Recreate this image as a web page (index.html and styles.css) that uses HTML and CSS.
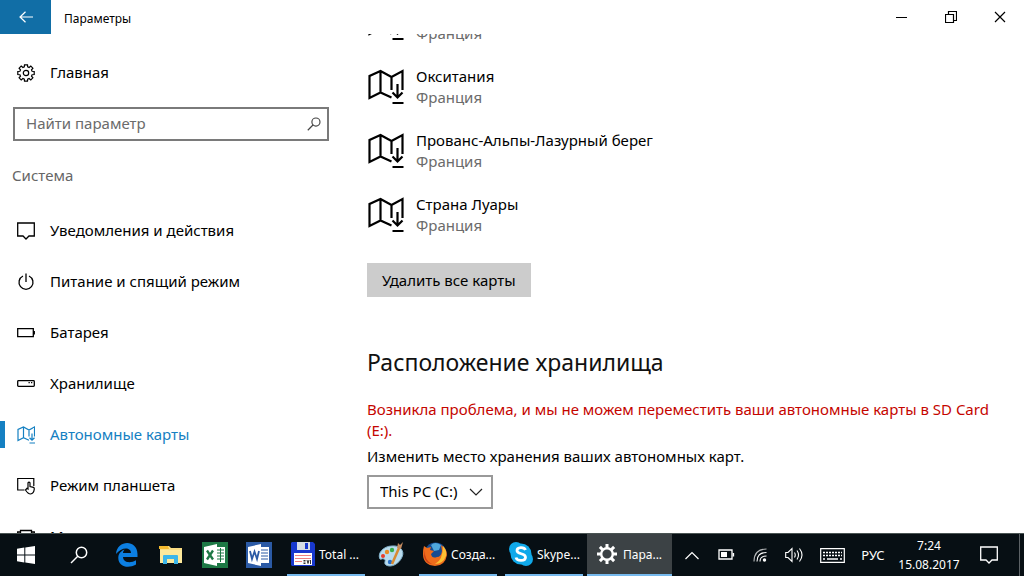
FILE: index.html
```html
<!DOCTYPE html>
<html lang="ru">
<head>
<meta charset="utf-8">
<title>Параметры</title>
<link rel="stylesheet" href="styles.css">
</head>
<body>
<svg class="defs" aria-hidden="true">
  <symbol id="map" viewBox="0 0 36 36">
    <path d="M24 28.500 13 23.500 2 29V7L13 2 24 8 35 2V21M13 2V23.500M24 8V21M30 15V28M25 23.500 30 28.500 35 23.500M25 34H36" fill="none" stroke="currentColor"/>
  </symbol>
  <symbol id="bubble" viewBox="0 0 18 18">
    <path d="M.7 1H17.300V14H12L9 17 6 14H.7Z" fill="none" stroke="currentColor" stroke-width="1.300"/>
  </symbol>
  <symbol id="lens" viewBox="0 0 18 18">
    <path d="M1 17 8 10" fill="none" stroke="currentColor"/><circle cx="11.500" cy="6.500" r="5.200" fill="none" stroke="currentColor"/>
  </symbol>
</svg>
<div class="screen">
  <header class="titlebar">
    <button class="back" aria-label="Назад"><svg width="14" height="12" viewBox="0 0 14 12"><path d="M14 6H1M6.500 .7 1 6 6.500 11.300" fill="none" stroke="#fff" stroke-width="1.200"/></svg></button>
    <h1 class="title">Параметры</h1>
    <div class="window-buttons">
      <button class="window-button" aria-label="Свернуть"><svg width="12" height="12"><path d="M0 6.500H11" stroke="#000"/></svg></button>
      <button class="window-button" aria-label="Восстановить"><svg width="12" height="12"><path d="M.5 3.500H8.500V11.500H.5ZM3.500 3V.5H11.500V9.500H9" fill="none" stroke="#000" stroke-width="1.200"/></svg></button>
      <button class="window-button" aria-label="Закрыть"><svg width="12" height="12"><path d="M1 1 11 11M11 1 1 11" stroke="#000" stroke-width="1.200"/></svg></button>
    </div>
  </header>

  <div class="body">
    <aside class="sidebar">
      <a class="nav-item home" href="#home">
        <svg class="nav-icon" viewBox="0 0 18 18"><path d="M7.300 2.900 7.500 .8H10.500L10.700 2.900 12.100 3.500 13.800 2.100 15.900 4.200 14.500 5.900 15.100 7.300 17.200 7.500V10.500L15.100 10.700 14.500 12.100 15.900 13.800 13.800 15.900 12.100 14.500 10.700 15.100 10.500 17.200H7.500L7.300 15.100 5.900 14.500 4.200 15.900 2.100 13.800 3.500 12.100 2.900 10.700 .8 10.500V7.500L2.900 7.300 3.500 5.900 2.100 4.200 4.200 2.100 5.900 3.500Z" fill="none" stroke="#000" stroke-width="1.200"/><circle cx="9" cy="9" r="2.700" fill="none" stroke="#000" stroke-width="1.200"/></svg>
        <span>Главная</span>
      </a>
      <form class="search">
        <input class="search-input" type="text" placeholder="Найти параметр" aria-label="Найти параметр">
        <button class="search-button" type="button" aria-label="Поиск"><svg class="bold" width="14" height="14"><use href="#lens"/></svg></button>
      </form>
      <h2 class="section">Система</h2>
      <nav>
        <a class="nav-item" href="#notifications"><svg class="nav-icon"><use href="#bubble"/></svg><span>Уведомления и действия</span></a>
        <a class="nav-item" href="#power"><svg class="nav-icon" viewBox="0 0 18 18"><path d="M9 .5V9M6 3A7 7 0 1 0 12 3" fill="none" stroke="#000" stroke-width="1.300"/></svg><span>Питание и спящий режим</span></a>
        <a class="nav-item" href="#battery"><svg class="nav-icon" viewBox="0 0 18 18"><path d="M.7 4.700H16.300V12.700H.7ZM17.300 7V10.500" fill="none" stroke="#000" stroke-width="1.300"/></svg><span>Батарея</span></a>
        <a class="nav-item" href="#storage"><svg class="nav-icon" viewBox="0 0 18 18"><rect x=".7" y="5.700" width="16.600" height="5.600" rx=".8" fill="none" stroke="#000" stroke-width="1.300"/><path d="M11.500 7.700H12.800M14 7.700H15.300" stroke="#000" stroke-width="1.300"/></svg><span>Хранилище</span></a>
        <a class="nav-item active" href="#maps" aria-current="page"><svg class="nav-icon map-small"><use href="#map"/></svg><span>Автономные карты</span></a>
        <a class="nav-item" href="#tablet"><svg class="nav-icon" viewBox="0 0 18 18"><path d="M7.500 13H.7V1.500H16.800V9M8.500 13 10 11.300 11 12V5.800Q12 4.300 13 5.800V9.500L16.500 10.300Q17.500 11 17.200 12.500 16.800 16.500 13.500 17 11 17 8.500 13Z" fill="none" stroke="#000" stroke-width="1.200"/></svg><span>Режим планшета</span></a>
        <a class="nav-item" href="#multitasking"><svg class="nav-icon" viewBox="0 0 18 18"><path d="M3.500 2.500H14.500V14H3.500ZM3 4H.7V12H3M15 4H17.300V12H15" fill="none" stroke="#000" stroke-width="1.300"/></svg><span>Многозадачность</span></a>
      </nav>
    </aside>

    <main class="content">
      <ul class="maps">
        <li class="map-item partial"><svg class="map-icon"><use href="#map"/></svg><div><div class="country">Франция</div></div></li>
        <li class="map-item"><svg class="map-icon"><use href="#map"/></svg><div><div class="region">Окситания</div><div class="country">Франция</div></div></li>
        <li class="map-item"><svg class="map-icon"><use href="#map"/></svg><div><div class="region">Прованс-Альпы-Лазурный берег</div><div class="country">Франция</div></div></li>
        <li class="map-item"><svg class="map-icon"><use href="#map"/></svg><div><div class="region">Страна Луары</div><div class="country">Франция</div></div></li>
      </ul>
      <button class="delete">Удалить все карты</button>
      <h2 class="heading">Расположение хранилища</h2>
      <p class="error">Возникла проблема, и мы не можем переместить ваши автономные карты в SD Card (E:).</p>
      <label class="label" for="drive">Изменить место хранения ваших автономных карт.</label>
      <div class="select-wrap">
        <select class="select" id="drive"><option>This PC (C:)</option></select>
        <svg class="chevron" width="14" height="8"><path d="M1 1 7 7 13 1" fill="none" stroke="#222" stroke-width="1.200"/></svg>
      </div>
    </main>
  </div>

  <footer class="taskbar">
    <button class="task wide" aria-label="Пуск"><svg width="18" height="18" viewBox="0 0 18 18"><path d="M0 2.700 7.300 1.600V8.500H0ZM8.300 1.400 18 0V8.500H8.300ZM0 9.500H7.300V16.400L0 15.300ZM8.300 9.500H18V18L8.300 16.600Z" fill="#fff"/></svg></button>
    <button class="task search-task" aria-label="Поиск"><svg width="18" height="18" class="bold"><use href="#lens"/></svg></button>
    <button class="task" aria-label="Edge"><svg width="22" height="24" viewBox="0 0 22 24"><path d="M0 11C1-3 21-4 21.500 11V14H7C7.500 20.500 15.500 20 20 17.200V21.500C12 26 2 23.500 2.300 14.500 2.500 10.500 5 8 8.500 6.500 7.500 7.700 7 9 7 10H15C15 3.500 5 4 0 11Z" fill="#0c7fe2"/></svg></button>
    <button class="task" aria-label="Проводник"><svg width="24" height="20" viewBox="0 0 24 20"><path d="M1 1H10L12 3H23V18H1Z" fill="#f9dc83"/><path d="M0 1H9L10 4H0Z" fill="#f2b92f"/><path d="M1 5H23V18H1Z" fill="#fde99c"/><path d="M4 19V11Q4 10 5 10H18Q19 10 19 11V19H15V14H8V19Z" fill="#3cb6ea"/></svg></button>
    <button class="task" aria-label="Excel"><svg width="26" height="26" viewBox="0 0 26 26"><path d="M0 0H26V26H0Z" fill="#1d7845"/><path d="M14 5H23V21H14Z" fill="#fff"/><path d="M2 5 15 2V24L2 21Z" fill="#fff"/><path d="M15 8H22M15 11H22M15 14H22M15 17H22M18.500 6V20" stroke="#1d7845"/><path d="M5 8.500 11 17.500M11 8.500 5 17.500" stroke="#1d7845" stroke-width="2.300"/></svg></button>
    <button class="task" aria-label="Word"><svg width="26" height="26" viewBox="0 0 26 26"><path d="M0 0H26V26H0Z" fill="#2b5aa5"/><path d="M14 5H23V21H14Z" fill="#fff"/><path d="M2 5 15 2V24L2 21Z" fill="#fff"/><path d="M15 8H22M15 11H22M15 14H22M15 17H22" stroke="#2b5aa5"/><path d="M4 9 6 17 8.500 9.500 11 17 13 9" fill="none" stroke="#2b5aa5" stroke-width="1.800"/></svg></button>
    <button class="task running"><svg width="24" height="24" viewBox="0 0 24 24"><path d="M1 0H22L24 2V24H1L0 23V1Z" fill="#1838ce"/><path d="M6 0H19V8H6Z" fill="#d6dce5"/><path d="M14 1H17V7H14Z" fill="#1838ce"/><path d="M3 11H21V23H3Z" fill="#fff"/><path d="M4 13.500H20M4 16.500H20M4 19.500H11" stroke="#f08080"/><path d="M12.500 18.500H14.500M12.500 20H14.500M12.500 21.500H14.500M16 18 17 21.500 18 18M19.500 18V22" fill="none" stroke="#333"/></svg><span>Total ...</span></button>
    <button class="task" aria-label="Paint"><svg width="26" height="26" viewBox="0 0 26 26"><path d="M2 17C-1 12 5 4 14 4 22 3 27 9 24 15 21 22 13 26 8 23 5 21 9 18 6 17 4 16 3 18 2 17Z" fill="#b9dcee" stroke="#83b3cc"/><circle cx="5" cy="14" r="2" fill="#e83d2a"/><circle cx="9" cy="10" r="2.200" fill="#e88b22"/><circle cx="14" cy="8" r="2.200" fill="#37ae4a"/><circle cx="12" cy="20" r="2.200" fill="#276ec6"/><path d="M14 22 21 6" stroke="#d88a31" stroke-width="2.500"/><path d="M19 6 20 1 22 3 25 0 23 7Z" fill="#c28a60"/></svg></button>
    <button class="task running"><svg width="24" height="24" viewBox="0 0 24 24"><circle cx="12.500" cy="11.500" r="11" fill="#164b91"/><path d="M8 3Q12-1 18 3L16 8 11 9Z" fill="#4fa8dd"/><path d="M1 4 4 6 8 5 7 8 11 9 8 12Q9 17 14 15 18 15 19 9L18 3Q24 7 24 13 22 24 12 24 0 23 0 12 0 7 1 4Z" fill="#ee6c1c"/><path d="M20 4Q24 8 23 14 20 22 12 22 20 18 20 4Z" fill="#fbc033"/><path d="M2 8Q1 18 9 22 2 21 1 14Z" fill="#c93d16"/></svg><span>Созда...</span></button>
    <button class="task running skype"><svg width="24" height="24" viewBox="0 0 24 24"><circle cx="12" cy="12" r="10.500" fill="#10a9ea"/><circle cx="7" cy="7" r="7" fill="#10a9ea"/><circle cx="17" cy="17" r="7" fill="#10a9ea"/><path d="M16.500 8C15 4.500 8 5 8 8.500 8 13 16.500 10.500 16.500 15.200 16.500 19.500 8 19.500 7 15.500" fill="none" stroke="#fff" stroke-width="2.800"/></svg><span>Skype...</span></button>
    <button class="task running current"><svg width="20" height="20" viewBox="0 0 20 20"><circle cx="10" cy="10" r="5.800" fill="none" stroke="#fff" stroke-width="2.400"/><g stroke="#fff" stroke-width="3"><path d="M10 0V4M10 16V20M0 10H4M16 10H20M2.900 2.900 5.700 5.700M14.300 14.300 17.100 17.100M2.900 17.100 5.700 14.300M14.300 5.700 17.100 2.900"/></g></svg><span>Пара...</span></button>

    <div class="tray">
      <button class="tray-button" aria-label="Скрытые значки"><svg width="14" height="9"><path d="M.5 8 7 1.500 13.500 8" fill="none" stroke="#fff" stroke-width="1.200"/></svg></button>
      <button class="tray-button" aria-label="Батарея"><svg width="17" height="12"><path d="M1 1H14V10H1ZM15.500 4V7.500" fill="none" stroke="#fff" stroke-width="1.300"/><path d="M3 3H9V8H3Z" fill="#fff"/></svg></button>
      <button class="tray-button" aria-label="Сеть"><svg width="14" height="14"><g fill="none" stroke="#fff" stroke-width="1.100"><path d="M1 13.500Q1 1 13.500 1" opacity=".7"/><path d="M4 13.500Q4 4.500 13.500 4.500M7 13.500Q7 8 13.500 8"/></g><circle cx="11.500" cy="12" r="1.700" fill="#fff"/></svg></button>
      <button class="tray-button" aria-label="Звук"><svg width="18" height="16"><path d="M.7 5.500H3L7 1.500V14.500L3 10.500H.7ZM9.500 5.500Q11 8 9.500 10.500M12 3.500Q15 8 12 12.500M14.500 1.500Q19.500 8 14.500 14.500" fill="none" stroke="#fff" stroke-width="1.100"/></svg></button>
      <button class="tray-button keyboard" aria-label="Клавиатура"><svg width="25" height="15"><path d="M.7 .7H24.300V14.300H.7Z" fill="none" stroke="#fff" stroke-width="1.200"/><path d="M3 4.500H22M3 7.500H22" stroke="#fff" stroke-width="1.500" stroke-dasharray="2 1"/><path d="M3 11H5M7 11H18M20 11H22" stroke="#fff" stroke-width="1.500"/></svg></button>
      <button class="tray-button language">РУС</button>
      <button class="clock"><span>7:24</span><span>15.08.2017</span></button>
      <button class="tray-button action" aria-label="Центр уведомлений"><svg width="18" height="18"><use href="#bubble"/></svg></button>
    </div>
  </footer>
</div>
</body>
</html>
```
FILE: styles.css
```css
* { box-sizing: border-box; }
body {
  margin: 0;
  background: #fff;
  color: #000;
  font: 15px/21px "Noto Sans", "Open Sans", sans-serif;
}
button { border: 0; padding: 0; background: none; color: inherit; font: inherit; }
svg { flex: none; display: block; }
h1, h2, p, ul { margin: 0; padding: 0; font-weight: 400; }
.defs { position: absolute; width: 0; height: 0; }
.screen { display: flex; flex-direction: column; height: 100vh; overflow: hidden; }

.titlebar { display: flex; flex: none; align-items: center; height: 34px; }
.back { display: grid; place-items: center; width: 51px; height: 34px; background: #116ea6; }
.title { margin-left: 13px; padding-top: 2px; font-size: 12px; }
.window-buttons { display: flex; margin-left: auto; }
.window-button { display: grid; place-items: center; width: 49px; height: 34px; }

.body { display: flex; flex: 1; min-height: 0; overflow: hidden; }
.sidebar { flex: none; width: 341px; }
.nav-item {
  display: flex;
  align-items: center;
  gap: 15px;
  height: 51px;
  padding-left: 17px;
  color: inherit;
  text-decoration: none;
}
.nav-icon { width: 18px; height: 18px; }
.home { margin: 13px 0 9px; }
.active { padding-left: 12px; border-left: 5px solid #1580c2; border-image: linear-gradient(transparent 25%, #1580c2 25%, #1580c2 75%, transparent 75%) 1; color: #1580c2; }
.map-small { stroke-width: 2.4px; }
.search {
  display: flex;
  align-items: center;
  height: 34px;
  margin: 0 12px 0 13px;
  border: 2px solid #7a7a7a;
}
.search-input { flex: 1; min-width: 0; padding: 0 11px 2px; border: 0; outline: 0; background: none; font: inherit; }
.search-input::placeholder { color: #6b6b6b; opacity: 1; }
.search-button { padding: 0 6px; color: #444; }
.section { margin: 24px 12px 19px; color: #666; font-size: 15px; line-height: 21px; }

.content { flex: 1; min-width: 0; padding: 0 20px 0 26px; }
.maps { list-style: none; }
.map-item { display: flex; align-items: center; gap: 12px; height: 64px; }
.partial { align-items: flex-end; height: 21px; padding-bottom: 11px; }
.partial .map-icon { margin-bottom: 3px; }
.map-icon { width: 37px; height: 36px; stroke-width: 2.2px; }
.country { color: #6b6b6b; }
.delete { display: block; height: 34px; margin-top: 16px; padding: 0 15px; background: #ccc; }
.heading { margin-top: 49px; font-size: 23px; line-height: 32px; color: #111; }
.error { margin-top: 21px; color: #c50500; }
.label { display: block; margin-top: 5px; }
.select-wrap { position: relative; width: 126px; margin-top: 8px; }
.select { width: 100%; height: 34px; padding: 0 11px 2px; border: 2px solid #999; border-radius: 0; appearance: none; background: #fff; color: #000; font: inherit; }
.chevron { position: absolute; top: 13px; right: 10px; pointer-events: none; }

.taskbar { display: flex; flex: none; height: 43px; border-top: 1px solid #4a5453; background: #070f14; color: #fff; font-size: 12px; white-space: nowrap; }
.task { display: flex; flex: none; align-items: center; justify-content: center; width: 44px; }
.wide { width: 52px; }
.search-task { width: 53px; }
.bold { stroke-width: 1.5px; }
.running { gap: 4px; justify-content: flex-start; width: 78px; margin: 0 4px 0 6px; padding-left: 4px; border-bottom: 2px solid #76b9ed; }
.skype { margin: 0 4px; }
.current { gap: 6px; width: 85px; margin: 0; padding-left: 10px; background: #3c4245; }
.tray { display: flex; margin-left: auto; padding-right: 4px; }
.tray-button { display: grid; place-items: center; width: 34px; }
.keyboard { width: 43px; }
.language { width: 38px; font-size: 13px; }
.clock { display: flex; flex-direction: column; align-items: center; justify-content: center; width: 74px; font-size: 12px; line-height: 19px; }
.action { width: 54px; padding-right: 7px; border-right: 1px solid #5c6266; }
```
